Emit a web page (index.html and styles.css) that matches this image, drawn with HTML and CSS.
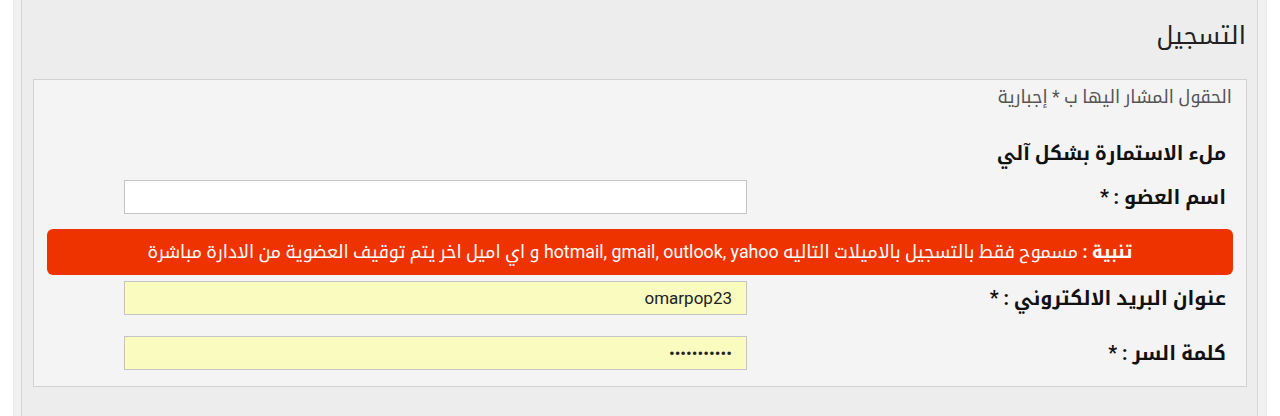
FILE: index.html
```html
<!DOCTYPE html>
<html lang="ar" dir="rtl">
<head>
<meta charset="utf-8">
<title>التسجيل</title>
<link rel="stylesheet" href="styles.css">
</head>
<body>
<div class="page">
  <div class="panel">
    <h1 class="title">التسجيل</h1>
    <div class="box">
      <p class="note">الحقول المشار اليها ب * إجبارية</p>
      <h2 class="autofill">ملء الاستمارة بشكل آلي</h2>
      <div class="row row-first">
        <label class="label">اسم العضو : *</label>
        <input class="field" type="text" value="">
      </div>
      <div class="alert"><b>تنبية :</b> مسموح فقط بالتسجيل بالاميلات التاليه hotmail, gmail, outlook, yahoo و اي اميل اخر يتم توقيف العضوية من الادارة مباشرة</div>
      <div class="row row-email">
        <label class="label">عنوان البريد الالكتروني : *</label>
        <input class="field filled" type="text" value="omarpop23">
      </div>
      <div class="row row-pass">
        <label class="label">كلمة السر : *</label>
        <input class="field filled" type="password" value="omarpop2345">
      </div>
    </div>
  </div>
</div>
</body>
</html>
```

FILE: styles.css
```css
html, body {
  margin: 0;
  padding: 0;
  height: 416px;
  overflow: hidden;
  background: #ffffff;
  font-family: Roboto, "Noto Kufi Arabic", sans-serif;
}

.page {
  margin: 0 13px;
  height: 100%;
  background: #f1f1f1;
  border-left: 1px solid #e8e8e8;
  border-right: 1px solid #e8e8e8;
  padding: 0 8px 0 7px;
  box-sizing: border-box;
}

.panel {
  height: 100%;
  background: #ededed;
  border-left: 1px solid #d6d6d6;
  border-right: 1px solid #d6d6d6;
  padding: 0 10px 0 11px;
  box-sizing: border-box;
}

.title {
  margin: 0;
  padding: 16px 1px 0 0;
  height: 79px;
  box-sizing: border-box;
  font-size: 25px;
  font-weight: normal;
  line-height: 40px;
  color: #222;
}

.box {
  background: #f4f4f4;
  border: 1px solid #d2d2d2;
  padding: 0 0 16px;
}

.note {
  margin: 0;
  padding: 6px 14px 0 0;
  font-size: 17.8px;
  line-height: 22px;
  color: #555;
}

.autofill {
  margin: 33px 20px 0 0;
  font-size: 19.3px;
  font-weight: bold;
  line-height: 26px;
  color: #111;
}

.row {
  display: grid;
  grid-template-columns: 479px 623px;
  align-items: center;
  padding-right: 20px;
}

.row-first { margin-top: 13px; }
.row-email { margin-top: 6px; }
.row-pass { margin-top: 21px; }

.label {
  font-size: 19.5px;
  font-weight: bold;
  color: #111;
  line-height: 26px;
  padding-top: 2px;
}

.field {
  height: 34px;
  box-sizing: border-box;
  border: 1px solid #c4c4c4;
  background: #ffffff;
  font-family: Roboto, sans-serif;
  font-size: 17px;
  color: #222;
  padding: 0 14px;
  text-align: right;
  direction: ltr;
  outline: none;
}

.field.filled {
  background: #f9fbbf;
}

.alert {
  margin: 15px 13px 0;
  height: 46px;
  box-sizing: border-box;
  background: #ef3300;
  border-radius: 6px;
  color: #fff;
  text-align: center;
  font-size: 17.8px;
  line-height: 45px;
}
```
